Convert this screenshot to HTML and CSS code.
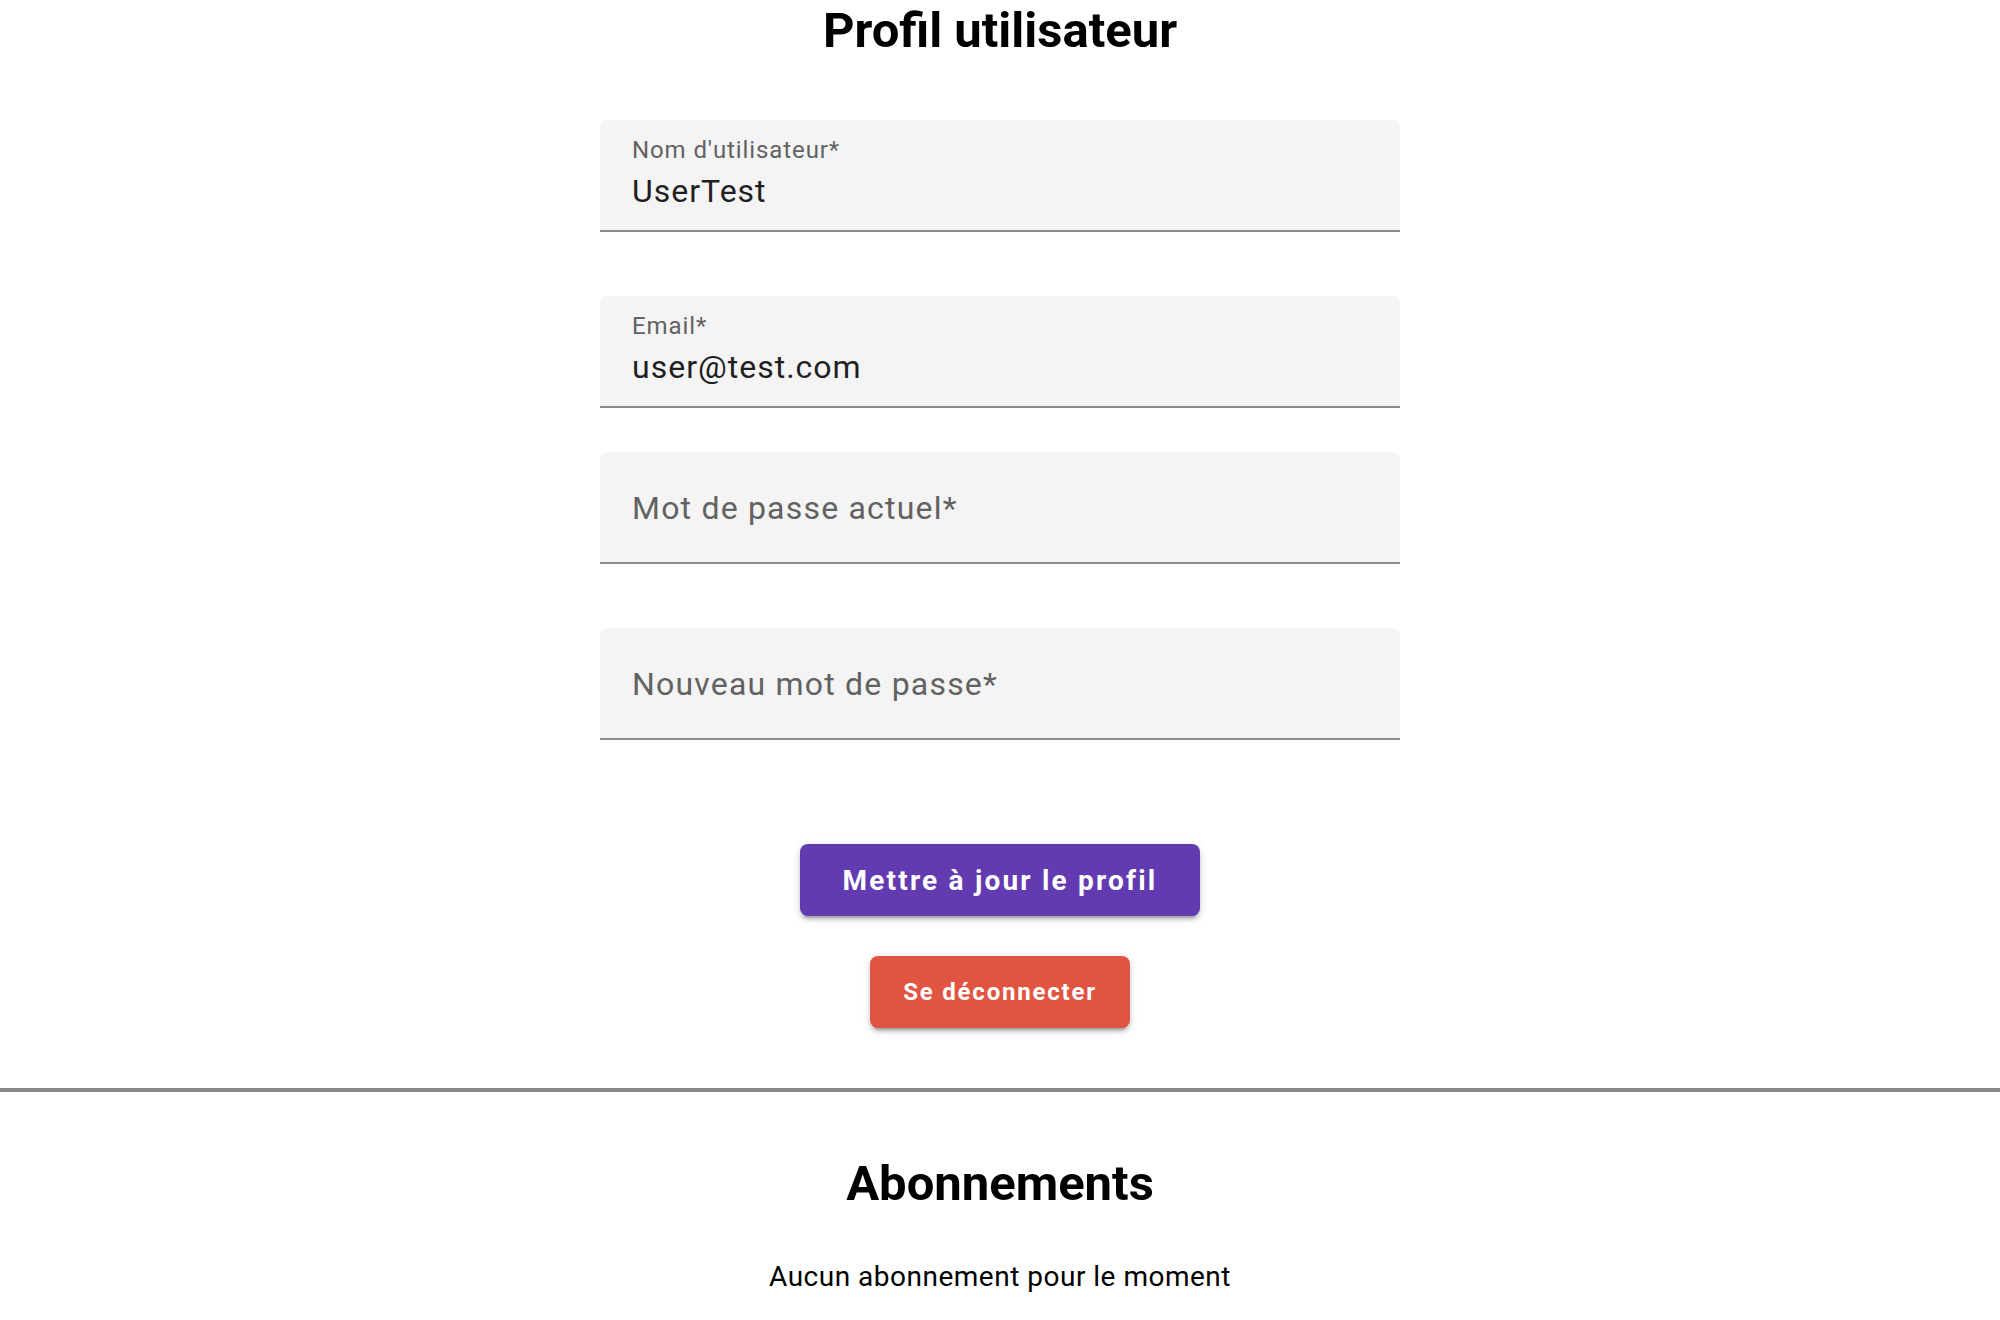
FILE: index.html
```html
<!DOCTYPE html>
<html lang="fr">
<head>
<meta charset="utf-8">
<title>Profil utilisateur</title>
<link rel="stylesheet" href="styles.css">
</head>
<body>
<main class="page">
  <h1 class="title">Profil utilisateur</h1>
  <form class="form">
    <div class="field field-filled gap-lg">
      <span class="field-label">Nom d'utilisateur*</span>
      <span class="field-value">UserTest</span>
    </div>
    <div class="field field-filled gap-sm">
      <span class="field-label">Email*</span>
      <span class="field-value">user@test.com</span>
    </div>
    <div class="field field-empty gap-lg">
      <span class="field-placeholder">Mot de passe actuel*</span>
    </div>
    <div class="field field-empty">
      <span class="field-placeholder">Nouveau mot de passe*</span>
    </div>
  </form>
  <div class="actions">
    <button class="btn btn-primary" type="button">Mettre à jour le profil</button>
    <button class="btn btn-danger" type="button">Se déconnecter</button>
  </div>
</main>
<hr class="divider">
<section class="subs">
  <h2 class="subs-title">Abonnements</h2>
  <p class="subs-empty">Aucun abonnement pour le moment</p>
</section>
</body>
</html>
```
FILE: styles.css
```css
* { box-sizing: border-box; }
html, body { margin: 0; padding: 0; background: #fff; }
body {
  font-family: Roboto, "Liberation Sans", Arial, sans-serif;
  color: #000;
}
.page {
  display: flex;
  flex-direction: column;
  align-items: center;
  padding-top: 1px;
}
.title {
  margin: 0;
  font-size: 49px;
  line-height: 60px;
  font-weight: 700;
}
.form {
  width: 800px;
  margin-top: 59px;
  display: flex;
  flex-direction: column;
}
.field {
  height: 112px;
  background: #f4f4f4;
  border-radius: 8px 8px 0 0;
  border-bottom: 2px solid #8c8c8c;
  padding: 0 32px;
  display: flex;
  flex-direction: column;
}
.gap-lg { margin-bottom: 64px; }
.gap-sm { margin-bottom: 44px; }
.field-filled { padding-top: 18px; }
.field-empty { justify-content: center; }
.field-label {
  font-size: 24px;
  line-height: 24px;
  letter-spacing: 0.9px;
  color: #626262;
}
.field-value {
  margin-top: 13px;
  font-size: 32px;
  line-height: 32px;
  letter-spacing: 1px;
  color: #1f1f1f;
}
.field-placeholder {
  font-size: 32px;
  line-height: 40px;
  letter-spacing: 1.2px;
  color: #626262;
  margin-top: 2px;
}
.actions {
  margin-top: 104px;
  display: flex;
  flex-direction: column;
  align-items: center;
  gap: 40px;
}
.btn {
  height: 72px;
  border: 0;
  border-radius: 8px;
  padding: 0 33px;
  font-family: Roboto, "Liberation Sans", Arial, sans-serif;
  font-size: 24px;
  font-weight: 700;
  letter-spacing: 1.8px;
  white-space: nowrap;
  color: #fff;
  box-shadow: 0 6px 2px -4px rgba(0,0,0,.2), 0 4px 4px 0 rgba(0,0,0,.14), 0 2px 10px 0 rgba(0,0,0,.12);
}
.btn-primary {
  width: 400px;
  padding: 0;
  background: #633bb0;
  font-size: 28px;
  letter-spacing: 2.2px;
}
.btn-danger {
  background: #e05442;
}
.divider {
  margin: 60px 0 0;
  border: 0;
  height: 4px;
  background: #888;
}
.subs {
  display: flex;
  flex-direction: column;
  align-items: center;
}
.subs-title {
  margin: 62px 0 0;
  font-size: 49px;
  line-height: 60px;
  font-weight: 700;
}
.subs-empty {
  margin: 43px 0 0;
  font-size: 28px;
  line-height: 40px;
  letter-spacing: 0.5px;
}
```
